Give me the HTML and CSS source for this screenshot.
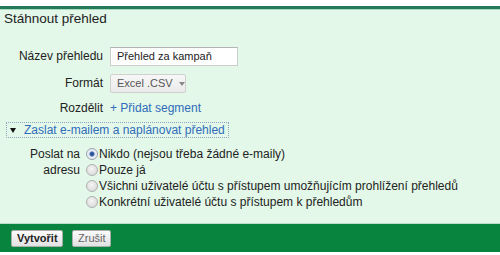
FILE: index.html
```html
<!DOCTYPE html>
<html lang="cs">
<head>
    <meta charset="UTF-8">
    <title>Stáhnout přehled</title>
    <link rel="stylesheet" href="styles.css">
</head>
<body>
    <div class="panel">
        <div class="title">Stáhnout přehled</div>

        <div class="form">
            <label class="label">Název přehledu</label>
            <div><input class="text-input" type="text" value="Přehled za kampaň"></div>

            <label class="label">Formát</label>
            <div><span class="select">Excel .CSV <span class="arrow"></span></span></div>

            <label class="label">Rozdělit</label>
            <div><a class="link" href="#">+ Přidat segment</a></div>
        </div>

        <div class="toggle">
            <span class="triangle"></span>
            <a class="link" href="#">Zaslat e-mailem a naplánovat přehled</a>
        </div>

        <div class="send">
            <div class="send-label">Poslat na<br>adresu</div>
            <div class="options">
                <label class="option"><span class="radio checked"></span>Nikdo (nejsou třeba žádné e-maily)</label>
                <label class="option"><span class="radio"></span>Pouze já</label>
                <label class="option"><span class="radio"></span>Všichni uživatelé účtu s přístupem umožňujícím prohlížení přehledů</label>
                <label class="option"><span class="radio"></span>Konkrétní uživatelé účtu s přístupem k přehledům</label>
            </div>
        </div>
    </div>

    <div class="footer">
        <button class="button primary">Vytvořit</button>
        <button class="button cancel">Zrušit</button>
    </div>
</body>
</html>
```

FILE: styles.css
```css
body {
    margin: 0;
    background: #ffffff;
    font-family: "Liberation Sans", Arial, sans-serif;
    font-size: 12px;
    color: #222;
}
.panel {
    margin-top: 6px;
    border-top: 3px solid #23795a;
    box-shadow: inset 0 1px 0 #a9dcbf;
    background: #e3f8e9;
    padding: 2px 0 13px 0;
}
.title {
    padding-left: 4px;
    font-size: 13.5px;
    line-height: 16px;
}
.form {
    display: grid;
    grid-template-columns: 103px auto;
    grid-template-rows: 20px 20px 16px;
    column-gap: 7px;
    row-gap: 7px;
    align-items: center;
    margin-top: 19px;
}
.label {
    text-align: right;
}
.text-input {
    display: block;
    box-sizing: border-box;
    width: 128px;
    height: 19px;
    border: 1px solid #cdcdcd;
    border-top-color: #b4b4b4;
    background: #fff;
    font-family: "Liberation Sans", Arial, sans-serif;
    font-size: 11px;
    padding: 0 0 0 6px;
    margin: 0;
    color: #222;
}
.select {
    display: block;
    box-sizing: border-box;
    width: 76px;
    height: 19px;
    line-height: 17px;
    border: 1px solid #d0d0d0;
    border-radius: 2px;
    background: linear-gradient(#f7f7f7, #ebebeb);
    font-size: 11px;
    color: #555;
    padding-left: 6px;
}
.arrow {
    display: inline-block;
    width: 0;
    height: 0;
    border-left: 3px solid transparent;
    border-right: 3px solid transparent;
    border-top: 4px solid #888;
    margin-left: 3px;
    vertical-align: 1px;
}
.link {
    color: #2f6cba;
    text-decoration: none;
    white-space: nowrap;
}
.toggle {
    box-sizing: border-box;
    margin: 6px 0 0 6px;
    width: 223px;
    height: 16px;
    border: 1px dotted #8fa3c0;
    display: flex;
    align-items: center;
}
.triangle {
    flex: none;
    width: 0;
    height: 0;
    border-left: 3px solid transparent;
    border-right: 3px solid transparent;
    border-top: 5px solid #111;
    margin: 0 8px 0 3px;
}
.send {
    display: flex;
    margin-top: 8px;
    line-height: 16px;
}
.send-label {
    width: 80px;
    text-align: right;
    margin-right: 6px;
}
.option {
    display: flex;
    align-items: center;
    white-space: nowrap;
}
.radio {
    flex: none;
    box-sizing: border-box;
    width: 12px;
    height: 12px;
    border-radius: 50%;
    border: 1px solid #b0b0b0;
    background: radial-gradient(circle at 45% 40%, #f6f6f6, #d2d2d2);
    margin-right: 1px;
}
.radio.checked {
    border-color: #9aa2b0;
    background: radial-gradient(circle, #23427d 0, #3e68ad 2px, #dfe7f3 3px, #f0f0f0 5px);
}
.footer {
    background: #08843f;
    border-top: 1px solid #b9e0c6;
    height: 28px;
    padding-left: 11px;
    display: flex;
    align-items: center;
    gap: 9px;
}
.button {
    box-sizing: border-box;
    height: 17px;
    border: 1px solid #a9b0ab;
    border-radius: 2px;
    background: linear-gradient(#fbfbfb, #e2e2e2);
    font-family: "Liberation Sans", Arial, sans-serif;
    font-size: 11px;
    line-height: 15px;
    color: #666;
    padding: 0 5px;
}
.button.primary {
    font-weight: bold;
    color: #222;
    width: 52px;
}
.button.cancel {
    width: 39px;
}
```
